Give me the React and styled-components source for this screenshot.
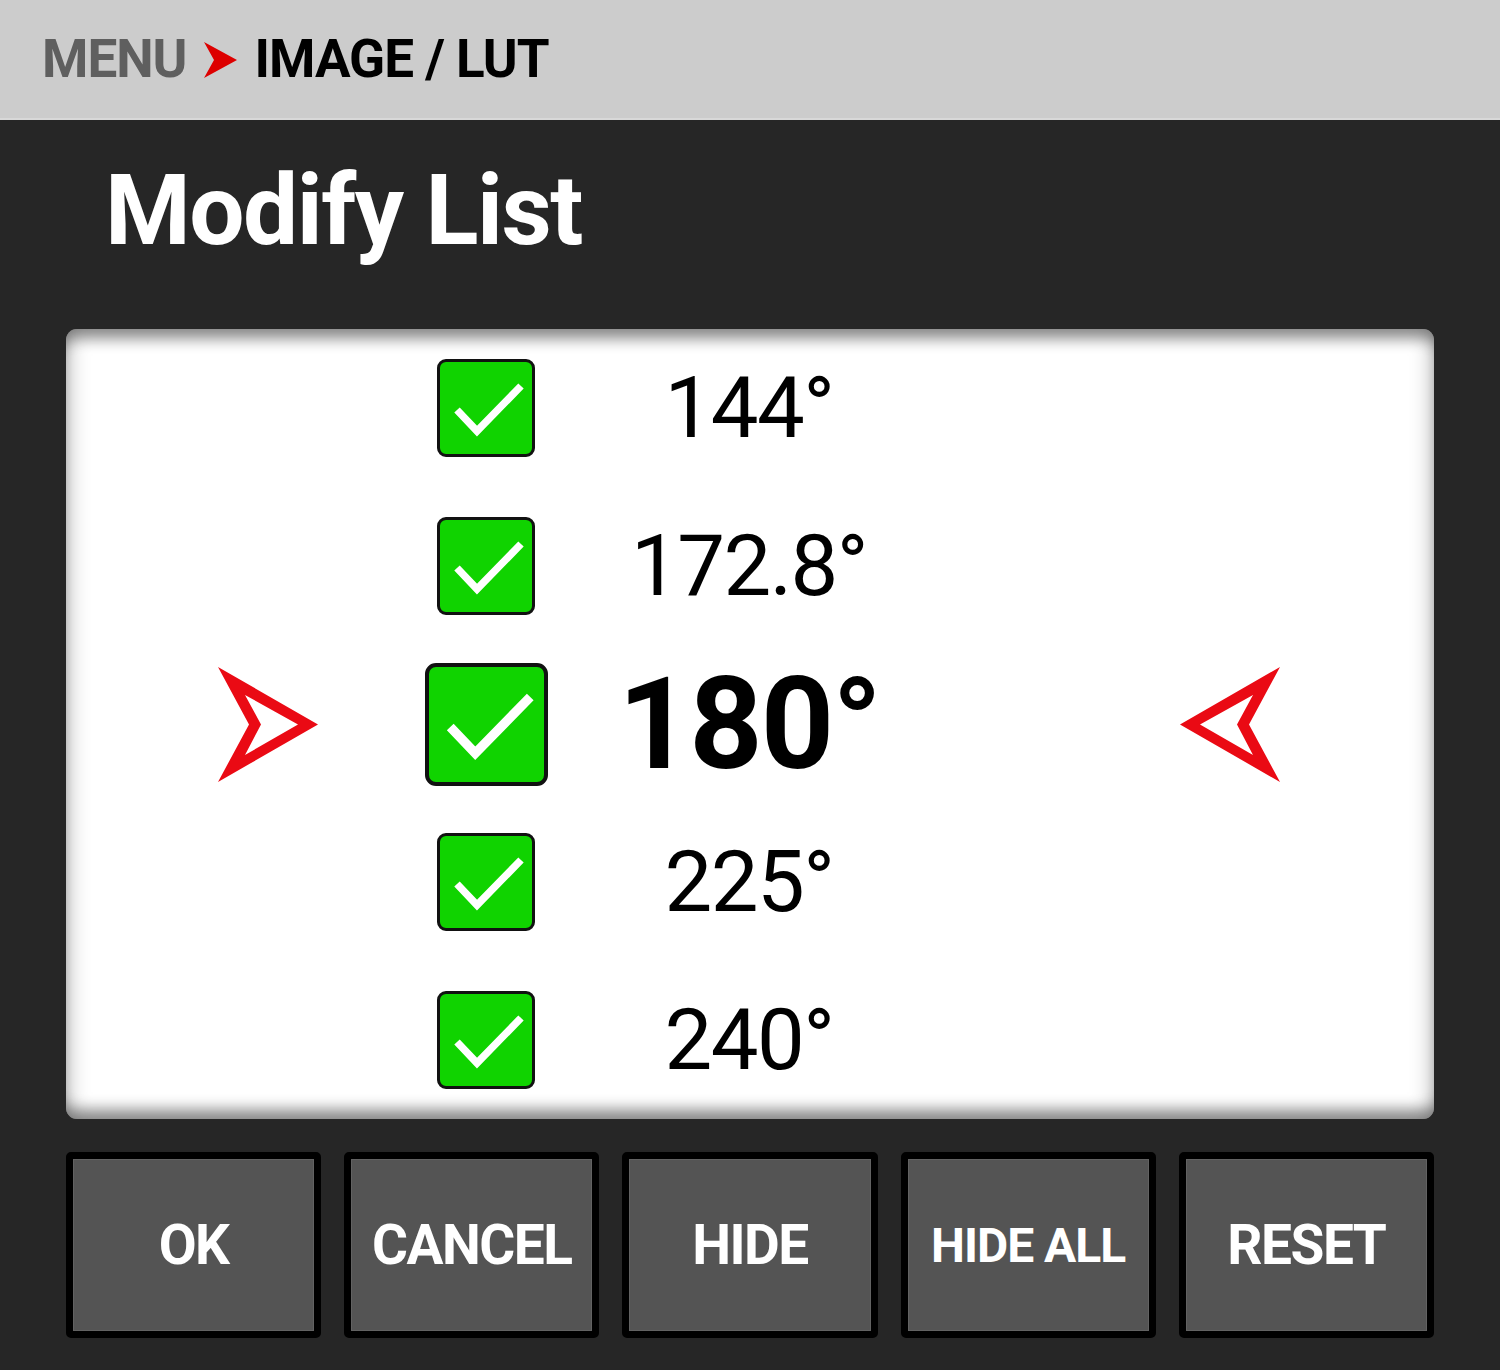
import styled, { createGlobalStyle } from "styled-components";

const GlobalStyle = createGlobalStyle`
    body {
        margin: 0;
        background: #262626;
        font-family: Roboto, 'Liberation Sans', sans-serif;
    }
`

const stops = [
    { label: "144°", on: true },
    { label: "172.8°", on: true },
    { label: "180°", on: true, active: true },
    { label: "225°", on: true },
    { label: "240°", on: true },
]

const actions = ["OK", "CANCEL", "HIDE", "HIDE ALL", "RESET"]

function Pointer({ flip }) {
    return (
        <svg width="100" height="115" viewBox="0 0 100 115" style={flip ? { transform: "scaleX(-1)" } : undefined}>
            <path
                fillRule="evenodd"
                fill="#ea0a14"
                d="M0 0 L100 57.5 L0 115 L31 57.5 Z M27 28 L43 57.5 L27 88 L80 57.5 Z"
            />
        </svg>
    )
}

function Check({ active }) {
    return (
        <Box $active={active}>
            <svg viewBox="0 0 92 92" width="100%" height="100%">
                <polyline points="17,48 37,69 81,24" fill="none" stroke="#fff" strokeWidth="7.5" />
            </svg>
        </Box>
    )
}

export default function App() {
    return (
        <>
            <GlobalStyle />
            <Header>
                <Crumb>MENU</Crumb>
                <svg width="34" height="36" viewBox="0 0 34 36">
                    <path d="M0 0 L33 18 L0 36 L10 18 Z" fill="#dd0000" />
                </svg>
                <Crumb $current>IMAGE / LUT</Crumb>
            </Header>
            <Main>
                <Title>Modify List</Title>
                <Panel>
                    {stops.map((s) => (
                        <Row key={s.label}>
                            {s.active && <LeftSlot><Pointer /></LeftSlot>}
                            <CheckSlot><Check active={s.active} /></CheckSlot>
                            <Value $active={s.active}>{s.label}</Value>
                            {s.active && <RightSlot><Pointer flip /></RightSlot>}
                        </Row>
                    ))}
                </Panel>
                <Buttons>
                    {actions.map((a) => (
                        <Button key={a} $small={a === "HIDE ALL"}>{a}</Button>
                    ))}
                </Buttons>
            </Main>
        </>
    )
}

const Header = styled.div`
    height: 118px;
    background: #cccccc;
    border-bottom: 2px solid #d8d8d8;
    display: flex;
    align-items: center;
    gap: 17px;
    padding-left: 42px;
    svg {
        margin-top: 2px;
    }
`
const Crumb = styled.span`
    font-size: 53px;
    font-weight: 700;
    letter-spacing: -1px;
    color: ${(p) => (p.$current ? "#000000" : "#5f5f5f")};
    line-height: 1;
`
const Main = styled.div`
    padding: 0 66px;
`
const Title = styled.h1`
    margin: 0;
    padding: 42px 0 69px 39px;
    font-size: 98px;
    line-height: 98px;
    font-weight: 700;
    letter-spacing: -1.5px;
    color: #ffffff;
`
const Panel = styled.div`
    height: 790px;
    background: #ffffff;
    border-radius: 11px;
    display: grid;
    grid-template-rows: repeat(5, 1fr);
    box-shadow:
        inset 0 0 22px rgba(0, 0, 0, 0.38),
        inset 0 18px 14px -8px rgba(0, 0, 0, 0.32),
        inset 0 -18px 14px -8px rgba(0, 0, 0, 0.32);
`
const Row = styled.div`
    display: grid;
    grid-template-columns: 358px 124px 402px 1fr;
    align-items: center;
`
const LeftSlot = styled.div`
    grid-column: 1;
    justify-self: end;
    margin-right: 106px;
    display: flex;
`
const RightSlot = styled.div`
    grid-column: 4;
    justify-self: start;
    margin-left: 230px;
    display: flex;
`
const CheckSlot = styled.div`
    grid-column: 2;
    display: flex;
    justify-content: center;
`
const Box = styled.div`
    width: ${(p) => (p.$active ? "123px" : "98px")};
    height: ${(p) => (p.$active ? "123px" : "98px")};
    box-sizing: border-box;
    border: ${(p) => (p.$active ? "4px" : "3px")} solid #111111;
    border-radius: ${(p) => (p.$active ? "11px" : "9px")};
    background: #10d300;
    display: flex;
`
const Value = styled.div`
    grid-column: 3;
    text-align: center;
    color: #000000;
    line-height: 1;
    font-size: ${(p) => (p.$active ? "128px" : "85px")};
    font-weight: ${(p) => (p.$active ? 700 : 400)};
    letter-spacing: ${(p) => (p.$active ? "-2px" : "-1.5px")};
`
const Buttons = styled.div`
    display: grid;
    grid-template-columns: repeat(5, 1fr);
    gap: 23px;
    margin-top: 33px;
    padding-bottom: 32px;
`
const Button = styled.button`
    height: 186px;
    box-sizing: border-box;
    border: 7px solid #000000;
    border-radius: 5px;
    background: #545454;
    box-shadow: inset 0 0 0 1px #626262;
    color: #ffffff;
    font-family: Roboto, 'Liberation Sans', sans-serif;
    font-weight: 700;
    font-size: ${(p) => (p.$small ? "48px" : "55px")};
    letter-spacing: ${(p) => (p.$small ? "-1px" : "-1.5px")};
    padding: 0;
`
